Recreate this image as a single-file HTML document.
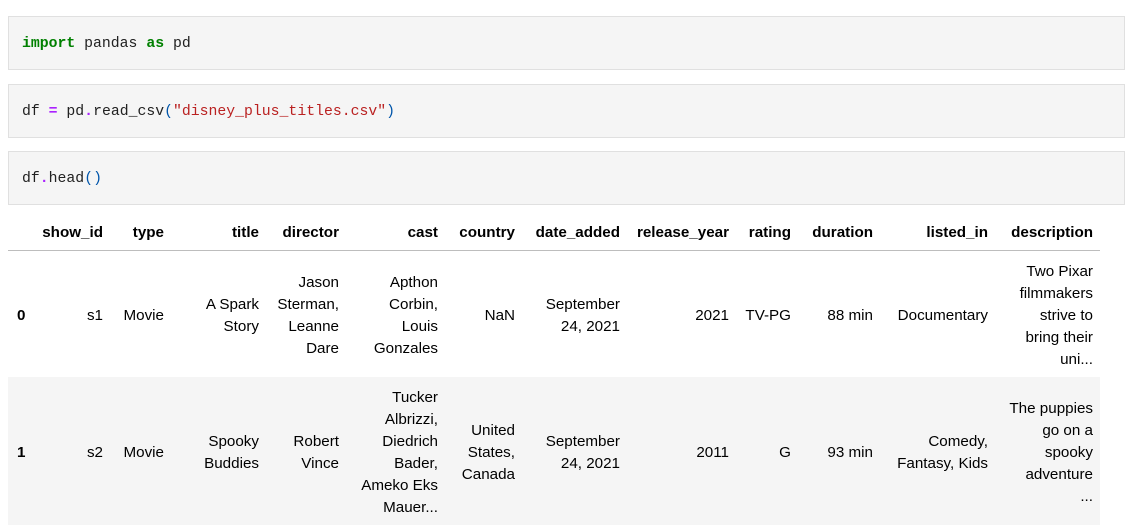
<!DOCTYPE html>
<html><head><meta charset="utf-8"><style>
body{margin:0;background:#fff;width:1129px;height:487px;overflow:hidden;position:relative;font-family:"Liberation Sans",sans-serif;color:#000}
.cell{position:absolute;left:8px;width:1117px;height:54px;background:#f5f5f5;border:1px solid #e0e0e0;font-family:"Liberation Mono",monospace;font-size:14.8px;line-height:54px;padding-left:13px;box-sizing:border-box;color:#212121}
.k{color:#008000;font-weight:bold}.o{color:#aa22ff;font-weight:bold}.s{color:#ba2121}.p{color:#0055aa}
table{position:absolute;left:8px;top:212px;border-collapse:collapse;table-layout:fixed;font-size:15.2px;line-height:22px}
td,th{padding:10px 0 6px 0;text-align:right;vertical-align:middle;white-space:nowrap;overflow:hidden}
th{font-weight:bold;}
thead tr{border-bottom:1px solid #bdbdbd}
tr.g{background:#f5f5f5}
td.i{text-align:left;padding-left:9px;font-weight:bold}
</style></head><body>
<div class="cell" style="top:16px"><span class="k">import</span> pandas <span class="k">as</span> pd</div>
<div class="cell" style="top:84px">df <span class="o">=</span> pd<span class="o">.</span>read_csv<span class="p">(</span><span class="s">"disney_plus_titles.csv"</span><span class="p">)</span></div>
<div class="cell" style="top:151px">df<span class="o">.</span>head<span class="p">()</span></div>
<table>
<colgroup><col style="width:32px"><col style="width:63px"><col style="width:61px"><col style="width:95px"><col style="width:80px"><col style="width:99px"><col style="width:77px"><col style="width:105px"><col style="width:109px"><col style="width:62px"><col style="width:82px"><col style="width:115px"><col style="width:105px"><col style="width:7px"></colgroup>
<thead><tr style="height:38px"><th></th><th>show_id</th><th>type</th><th>title</th><th>director</th><th>cast</th><th>country</th><th>date_added</th><th>release_year</th><th>rating</th><th>duration</th><th>listed_in</th><th>description</th><th></th></tr></thead>
<tbody>
<tr style="height:126px"><td class="i">0</td><td>s1</td><td>Movie</td><td>A Spark<br>Story</td><td>Jason<br>Sterman,<br>Leanne<br>Dare</td><td>Apthon<br>Corbin,<br>Louis<br>Gonzales</td><td>NaN</td><td>September<br>24, 2021</td><td>2021</td><td>TV-PG</td><td>88 min</td><td>Documentary</td><td>Two Pixar<br>filmmakers<br>strive to<br>bring their<br>uni...</td><td></td></tr>
<tr class="g" style="height:148px"><td class="i">1</td><td>s2</td><td>Movie</td><td>Spooky<br>Buddies</td><td>Robert<br>Vince</td><td>Tucker<br>Albrizzi,<br>Diedrich<br>Bader,<br>Ameko Eks<br>Mauer...</td><td>United<br>States,<br>Canada</td><td>September<br>24, 2021</td><td>2011</td><td>G</td><td>93 min</td><td>Comedy,<br>Fantasy, Kids</td><td>The puppies<br>go on a<br>spooky<br>adventure<br>...</td><td></td></tr>
</tbody></table>
</body></html>
